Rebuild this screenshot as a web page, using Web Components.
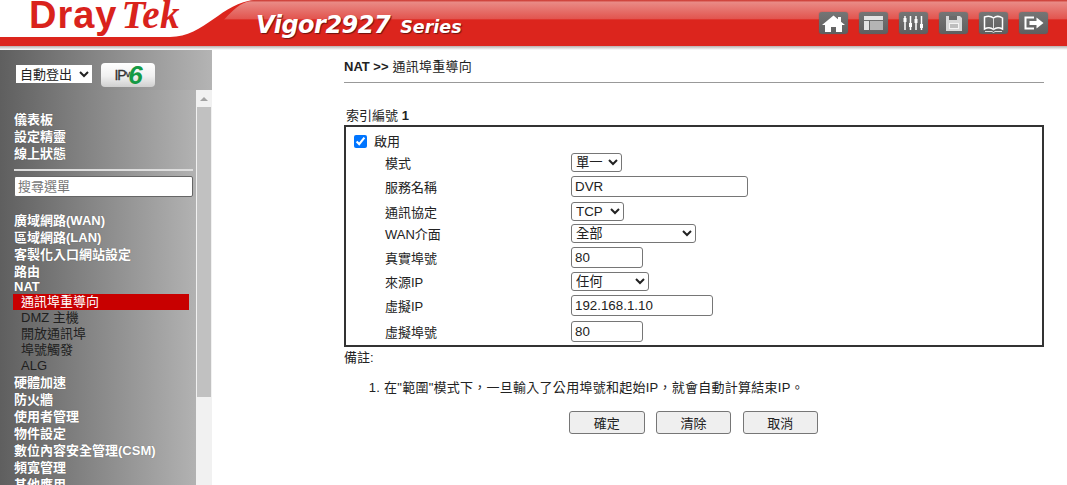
<!DOCTYPE html>
<html lang="zh-Hant">
<head>
<meta charset="utf-8">
<title>Vigor2927 Series</title>
<style>
html, body { margin: 0; height: 485px; overflow: hidden; background: #fff; }
body { font: 13px/17px "Liberation Sans", "Noto Sans CJK TC", sans-serif; color: #222; }
</style>
</head>
<body>
<dt-app>
	<dt-header slot="header" model="Vigor2927" series="Series"></dt-header>
	<dt-sidebar slot="sidebar">
		<dt-menu-item>儀表板</dt-menu-item>
		<dt-menu-item>設定精靈</dt-menu-item>
		<dt-menu-item>線上狀態</dt-menu-item>
		<dt-menu-search></dt-menu-search>
		<dt-menu-item>廣域網路(WAN)</dt-menu-item>
		<dt-menu-item>區域網路(LAN)</dt-menu-item>
		<dt-menu-item>客製化入口網站設定</dt-menu-item>
		<dt-menu-item>路由</dt-menu-item>
		<dt-menu-item tight>NAT</dt-menu-item>
		<dt-menu-item sub active>通訊埠重導向</dt-menu-item>
		<dt-menu-item sub>DMZ 主機</dt-menu-item>
		<dt-menu-item sub>開放通訊埠</dt-menu-item>
		<dt-menu-item sub>埠號觸發</dt-menu-item>
		<dt-menu-item sub>ALG</dt-menu-item>
		<dt-menu-item>硬體加速</dt-menu-item>
		<dt-menu-item>防火牆</dt-menu-item>
		<dt-menu-item>使用者管理</dt-menu-item>
		<dt-menu-item>物件設定</dt-menu-item>
		<dt-menu-item>數位內容安全管理(CSM)</dt-menu-item>
		<dt-menu-item>頻寬管理</dt-menu-item>
		<dt-menu-item>其他應用</dt-menu-item>
	</dt-sidebar>
	<dt-port-form></dt-port-form>
</dt-app>

<script>
const FONT = '"Liberation Sans", "Noto Sans CJK TC", sans-serif';

const ICONS = [
	// home
	'<path d="M14.5 3.5 3 13h3v7h6v-5h5v5h6v-7h3L22 9.8V5h-3v2.3z" fill="#fff"/>',
	// layout
	'<path d="M5 4h19v4H5zM5 9h5v9H5z" fill="#e4e4e4"/><path d="M11 9h13v9H11z" fill="#b4b4b4"/>',
	// sliders
	'<path d="M6 4v14M11.500 4v14M17 4v14M22.500 4v14" stroke="#fff" stroke-width="1.500"/><path d="M4.500 6h3v4h-3zM10 11h3v4h-3zM15.500 7h3v4h-3zM21 12h3v4h-3z" fill="#fff"/>',
	// floppy
	'<path d="M7 4h14l2 2v13H7z" fill="#d8d8d8"/><path d="M10 4h8v4h-8z" fill="#6a6a6a"/><path d="M10 11h10v6H10z" fill="#f4f4f4"/><path d="M11 13h8M11 15h8" stroke="#888"/>',
	// book
	'<path d="M5.500 5c3-1 6.500-1 9 1 2.500-2 6-2 9 0v11c-3-1.500-6.500-1.500-9 .5-2.500-2-6-2-9-.5z" fill="none" stroke="#fff" stroke-width="1.500"/><path d="M14.500 6v11.500M6 19.500h7l1.500 1 1.500-1h7" fill="none" stroke="#ddd"/>',
	// logout
	'<path d="M15 5.500H6.500v11H15" fill="none" stroke="#fff" stroke-width="2"/><path d="M10.500 9h7V5.500l7 5.500-7 5.500V13h-7z" fill="#fff"/>',
];

class DtApp extends HTMLElement {
	constructor() {
		super();
		this.attachShadow({mode: 'open'}).innerHTML = `
<style>
:host { display: grid; grid-template-columns: 212px 1fr; grid-template-rows: 50px 435px; height: 485px; }
.header { grid-column: 1 / 3; }
.side { min-height: 0; overflow: hidden; }
.main { min-width: 0; }
</style>
<div class="header"><slot name="header"></slot></div>
<div class="side"><slot name="sidebar"></slot></div>
<div class="main"><slot></slot></div>`;
	}
}

class DtHeader extends HTMLElement {
	constructor() {
		super();
		const icons = ICONS.map((e) => `<span class="icon"><svg viewBox="0 0 29 22" width="29" height="22">${e}</svg></span>`).join('');
		this.attachShadow({mode: 'open'}).innerHTML = `
<style>
:host { display: block; height: 50px; position: relative; overflow: hidden; background: #fff; font-family: "Liberation Sans", sans-serif; }
svg.shape { position: absolute; left: 0; top: 0; }
.bar { position: relative; display: flex; align-items: flex-start; height: 50px; }
.logo { width: 256px; padding-left: 29px; box-sizing: border-box; color: #d9231c; font-size: 38px; line-height: 30px; white-space: nowrap; }
.logo b { font-weight: 700; letter-spacing: 1px; }
.logo i { font: italic 700 39px/30px "Liberation Serif", serif; margin-left: 4px; letter-spacing: .5px; }
.model { color: #fff; font-style: italic; font-weight: 700; white-space: nowrap; font-family: "DejaVu Sans", sans-serif; font-size: 24px; line-height: 30px; margin-top: 10px; text-shadow: 1px 1px 1px #6b1410; letter-spacing: -.5px; }
.model small { font-size: 17.5px; margin-left: 10px; letter-spacing: 0; }
.icons { display: flex; gap: 11px; margin: 12px 0 0 auto; padding-right: 19px; }
.icon { display: block; width: 29px; height: 22px; border-radius: 3px; background: linear-gradient(#757575, #5f5f5f); box-shadow: 0 0 1px #555; }
.icon svg { display: block; }
</style>
<svg class="shape" width="1067" height="50" viewBox="0 0 1067 50">
	<defs>
		<linearGradient id="shine" x1="0" y1="0" x2="0" y2="1">
			<stop offset="0" stop-color="#c9322b"/>
			<stop offset=".06" stop-color="#e98a85"/>
			<stop offset=".5" stop-color="#e2544e"/>
			<stop offset=".52" stop-color="#dc251d"/>
			<stop offset="1" stop-color="#dc251d"/>
		</linearGradient>
		<linearGradient id="fade" x1="0" y1="0" x2="0" y2="1">
			<stop offset="0" stop-color="#b9b0ae"/>
			<stop offset="1" stop-color="#fff"/>
		</linearGradient>
	</defs>
	<path d="M255 0H1067V46H0V37H170C205 37 222 2 255 0Z" fill="#dc251d"/>
	<path d="M255 0H1067V38H203C224 26 232 2 255 0Z" fill="url(#shine)"/>
	<rect y="46" width="1067" height="4" fill="url(#fade)"/>
</svg>
<div class="bar">
	<div class="logo"><b>Dray</b><i>Tek</i></div>
	<div class="model">${this.getAttribute('model')}<small>${this.getAttribute('series')}</small></div>
	<div class="icons">${icons}</div>
</div>`;
	}
}

class DtSidebar extends HTMLElement {
	constructor() {
		super();
		this.attachShadow({mode: 'open'}).innerHTML = `
<style>
:host { display: block; height: 435px; overflow: hidden; }
.top { display: flex; align-items: center; gap: 9px; height: 40px; padding: 8px 0 0 16px; box-sizing: border-box; background: linear-gradient(90deg, #5f5f5f, #b4b4b4); }
select { width: 76px; height: 18px; padding: 0; border: 0; background: #fff; font: 13px ${FONT}; color: #222; }
.ipv6 { display: flex; align-items: center; justify-content: center; box-sizing: border-box; width: 54px; height: 24px; margin-top: 1px; border-radius: 4px; background: linear-gradient(#fff, #f0f0f0 55%, #cfcfcf); color: #333; font: 400 14px/24px "Liberation Sans", sans-serif; letter-spacing: -1px; -webkit-text-stroke: .3px #333; }
.ipv6 sub { font-size: 9px; line-height: 9px; vertical-align: -3px; }
.ipv6 i { color: #159a45; font-size: 26px; line-height: 24px; font-weight: 700; margin-left: -1px; -webkit-text-stroke: 0; }
.body { display: grid; grid-template-columns: 196px 16px; height: 395px; }
.panel { min-width: 0; background: linear-gradient(90deg, #5f5f5f, #b2b2b2); }
.list { padding: 21px 0 0 14px; width: 179px; box-sizing: border-box; }
.bar { background: #f1f1f1; display: flex; flex-direction: column; align-items: center; }
.arrow { flex: none; height: 17px; display: flex; align-items: center; justify-content: center; }
.arrow::before { content: ""; border: 4px solid transparent; border-top: 0; border-bottom: 4px solid #a3a3a3; }
.thumb { flex: none; width: 14px; height: 290px; background: #c1c1c1; }
</style>
<div class="top">
	<select><option>自動登出</option></select>
	<span class="ipv6">IP<sub>v</sub><i>6</i></span>
</div>
<div class="body">
	<div class="panel"><div class="list"><slot></slot></div></div>
	<div class="bar"><span class="arrow"></span><span class="thumb"></span></div>
</div>`;
	}
}

class DtMenuItem extends HTMLElement {
	constructor() {
		super();
		this.attachShadow({mode: 'open'}).innerHTML = `
<style>
:host { display: block; height: 17px; font: 700 13px/17px ${FONT}; color: #fff; white-space: nowrap; text-shadow: 0 0 1px rgba(60, 60, 60, .5); }
:host([tight]) { height: 14px; line-height: 14px; }
:host([sub]) { height: 16px; line-height: 16px; padding-left: 7px; color: #1f1f1f; font-weight: 400; text-shadow: none; }
:host([active]) { box-sizing: border-box; width: 176px; margin-left: -1px; padding-left: 8px; background: #c80000; color: #fff; }
</style>
<slot></slot>`;
	}
}

class DtMenuSearch extends HTMLElement {
	constructor() {
		super();
		this.attachShadow({mode: 'open'}).innerHTML = `
<style>
:host { display: block; margin: 7px 0 15px; border-top: 2px solid #ddd; padding-top: 5px; width: 179px; }
input { display: block; box-sizing: border-box; width: 179px; height: 21px; margin: 0; padding: 0 3px; border: 1px solid #666; border-radius: 2px; background: #fff; font: 13px ${FONT}; }
input::placeholder { color: #777; }
</style>
<input placeholder="搜尋選單">`;
	}
}

class DtField extends HTMLElement {
	constructor() {
		super();
		this.attachShadow({mode: 'open'}).innerHTML = `
<style>
:host { display: grid; grid-template-columns: 186px 1fr; align-items: center; height: ${this.getAttribute('row')}px; padding-left: 39px; font: 13px/17px ${FONT}; color: #222; }
span { padding-top: 2px; }
</style>
<span>${this.getAttribute('label')}</span>
<div><slot></slot></div>`;
	}
}

class DtSelect extends HTMLElement {
	constructor() {
		super();
		const width = this.getAttribute('width');
		this.attachShadow({mode: 'open'}).innerHTML = `
<style>
:host { display: block; line-height: 0; }
select { box-sizing: border-box; width: ${width}px; height: 19px; margin: 0; padding: 0; background: #fff; border: 1px solid #767676; border-radius: 3px; font: 13.33px ${FONT}; color: #222; }
</style>
<select><option>${this.getAttribute('value')}</option></select>`;
	}
}

class DtInput extends HTMLElement {
	constructor() {
		super();
		const width = this.getAttribute('width');
		this.attachShadow({mode: 'open'}).innerHTML = `
<style>
:host { display: block; line-height: 0; }
input { box-sizing: border-box; width: ${width}px; height: 21px; margin: 0; padding: 0 3px; background: #fff; border: 1px solid #767676; border-radius: 3px; font: 13.33px ${FONT}; color: #222; }
</style>
<input value="${this.getAttribute('value')}">`;
	}
}

class DtButton extends HTMLElement {
	constructor() {
		super();
		this.attachShadow({mode: 'open'}).innerHTML = `
<style>
:host { display: block; }
button { display: block; box-sizing: border-box; width: 75.6px; height: 23px; padding: 0; background: #efefef; border: 1px solid #767676; border-radius: 3px; font: 13px ${FONT}; color: #222; }
</style>
<button><slot></slot></button>`;
	}
}

class DtPortForm extends HTMLElement {
	constructor() {
		super();
		this.attachShadow({mode: 'open'}).innerHTML = `
<style>
:host { display: block; padding: 8px 23px 0 132px; font: 13px/17px ${FONT}; color: #222; }
h1 { margin: 0; height: 24px; font: 13px/17px ${FONT}; border-bottom: 1px solid #999; letter-spacing: .25px; }
h1 b { font-weight: 700; letter-spacing: 0; }
h2 { margin: 24px 0 0 2px; height: 18px; font: 13px/17px ${FONT}; }
h2 b { font-weight: 700; }
.box { border: 2px solid #333; height: 214px; padding-top: 4px; }
.enable { display: flex; align-items: center; height: 20px; padding-left: 8px; }
.enable input { margin: 0 7px 0 0; width: 13px; height: 13px; }
.note { margin-top: 2px; }
ol { margin: 13px 0 0; padding: 0 0 0 40px; height: 32px; letter-spacing: .26px; }
.actions { display: flex; gap: 11.2px; margin-left: 225px; }
</style>
<h1><b>NAT &gt;&gt;</b> 通訊埠重導向</h1>
<h2>索引編號 <b>1</b></h2>
<div class="box">
	<label class="enable"><input type="checkbox" checked>啟用</label>
	<dt-field row="22" label="模式"><dt-select width="51" value="單一"></dt-select></dt-field>
	<dt-field row="26" label="服務名稱"><dt-input width="177" value="DVR"></dt-input></dt-field>
	<dt-field row="24" label="通訊協定"><dt-select width="53" value="TCP"></dt-select></dt-field>
	<dt-field row="20" label="WAN介面"><dt-select width="125" value="全部"></dt-select></dt-field>
	<dt-field row="28" label="真實埠號"><dt-input width="72" value="80"></dt-input></dt-field>
	<dt-field row="20" label="來源IP"><dt-select width="78" value="任何"></dt-select></dt-field>
	<dt-field row="28" label="虛擬IP"><dt-input width="142" value="192.168.1.10"></dt-input></dt-field>
	<dt-field row="24" label="虛擬埠號"><dt-input width="72" value="80"></dt-input></dt-field>
</div>
<div class="note">備註:</div>
<ol><li>在"範圍"模式下，一旦輸入了公用埠號和起始IP，就會自動計算結束IP。</li></ol>
<div class="actions">
	<dt-button>確定</dt-button>
	<dt-button>清除</dt-button>
	<dt-button>取消</dt-button>
</div>`;
	}
}

window.customElements.define('dt-app', DtApp);
window.customElements.define('dt-header', DtHeader);
window.customElements.define('dt-sidebar', DtSidebar);
window.customElements.define('dt-menu-item', DtMenuItem);
window.customElements.define('dt-menu-search', DtMenuSearch);
window.customElements.define('dt-field', DtField);
window.customElements.define('dt-select', DtSelect);
window.customElements.define('dt-input', DtInput);
window.customElements.define('dt-button', DtButton);
window.customElements.define('dt-port-form', DtPortForm);
</script>
</body>
</html>
